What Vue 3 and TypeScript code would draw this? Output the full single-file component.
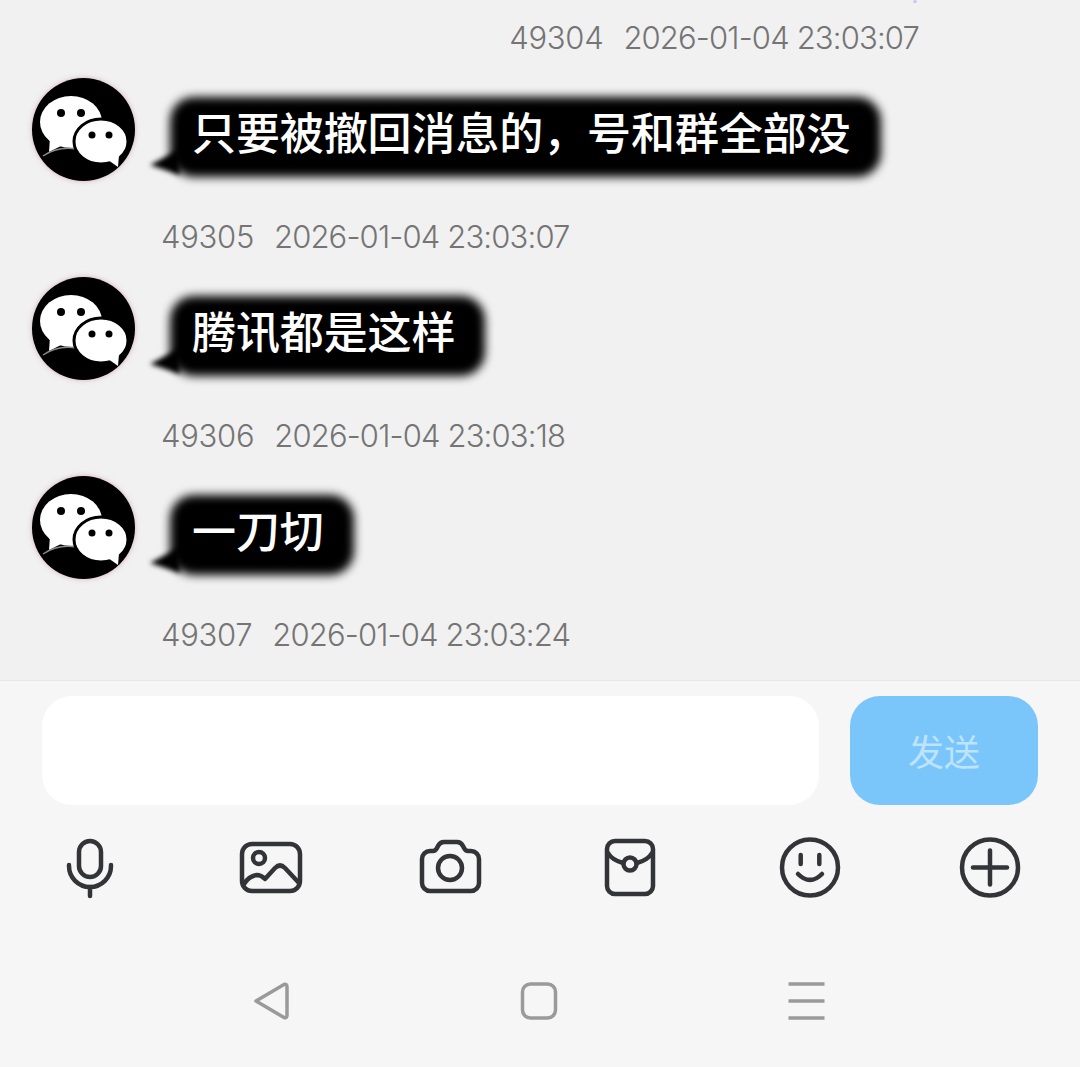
<script setup lang="ts">
interface Message {
  id: number;
  time: string;
  text: string;
}

const messages: Message[] = [
  { id: 49305, time: '2026-01-04 23:03:07', text: '只要被撤回消息的，号和群全部没' },
  { id: 49306, time: '2026-01-04 23:03:18', text: '腾讯都是这样' },
  { id: 49307, time: '2026-01-04 23:03:24', text: '一刀切' }
];
</script>

<template>
  <div class="page">
    <div class="chat">
      <span class="dot"></span>
      <div class="meta meta-right">
        <span class="num">49304</span>
        <span class="time">2026-01-04 23:03:07</span>
      </div>
      <template v-for="msg in messages" :key="msg.id">
        <div class="row">
          <svg class="avatar" viewBox="0 0 103 103">
            <ellipse cx="39" cy="44" rx="31" ry="26" fill="#fff" />
            <path d="M18 60 L17 74 L33 66 Z" fill="#fff" />
            <path d="M11 78 Q26 68 44 71" fill="none" stroke="#8a8a8a" stroke-width="1.5" />
            <circle cx="29" cy="35" r="4" fill="#000" />
            <circle cx="49" cy="35" r="4" fill="#000" />
            <ellipse cx="69" cy="63.5" rx="27" ry="22.5" fill="#fff" stroke="#000" stroke-width="3" />
            <path d="M76 82 L86 89 L87 77 Z" fill="#fff" />
            <circle cx="60" cy="57" r="3.500" fill="#000" />
            <circle cx="77" cy="57" r="3.500" fill="#000" />
          </svg>
          <div class="bubble"><span class="label">{{ msg.text }}</span></div>
        </div>
        <div class="meta">
          <span class="num">{{ msg.id }}</span>
          <span class="time">{{ msg.time }}</span>
        </div>
      </template>
    </div>

    <div class="bar">
      <div class="input-row">
        <div class="input"></div>
        <div class="send">发送</div>
      </div>

      <div class="tools">
        <svg viewBox="0 0 72 72">
          <rect x="25" y="9" width="22" height="36" rx="11" />
          <path d="M15 33 v1 a21 21 0 0 0 42 0 v-1" />
          <path d="M36 55 v9" />
        </svg>
        <svg viewBox="0 0 72 72">
          <rect x="8" y="12" width="58" height="47" rx="10" />
          <circle cx="25" cy="26" r="6" />
          <path d="M10 52 Q15 44 23 43 Q27 43 31 47 L41 36 Q46 31 51 36 L65 51" />
        </svg>
        <svg viewBox="0 0 72 72">
          <path d="M8 27 a8 8 0 0 1 8 -8 h3 c2 0 3 -1 4 -3 l1 -2 c1 -2 3 -4 6 -4 h13 c3 0 5 2 6 4 l1 2 c1 2 2 3 4 3 h3 a8 8 0 0 1 8 8 v24 a8 8 0 0 1 -8 8 h-41 a8 8 0 0 1 -8 -8 z" />
          <circle cx="36" cy="36" r="12" />
        </svg>
        <svg viewBox="0 0 72 72">
          <rect x="13" y="9" width="46" height="53" rx="8" />
          <path d="M14 21 Q18 28 29 31" />
          <path d="M58 21 Q54 28 43 31" />
          <circle cx="36" cy="32" r="6.500" />
        </svg>
        <svg viewBox="0 0 72 72">
          <circle cx="36" cy="35.500" r="28" />
          <path d="M26.700 23 v9" />
          <path d="M45.300 23 v9" />
          <path d="M24 42 Q36 54 48 42" />
        </svg>
        <svg viewBox="0 0 72 72">
          <circle cx="36" cy="35.500" r="28" />
          <path d="M19 35.500 h34" />
          <path d="M36 18.500 v34" />
        </svg>
      </div>

      <div class="nav">
        <svg viewBox="0 0 40 40">
          <path d="M5 20 L33 3.500 Q36 2.500 36 6 V34 Q36 37.500 33 36.500 Z" />
        </svg>
        <svg viewBox="0 0 40 40">
          <rect x="3.500" y="3" width="33" height="34" rx="8" />
        </svg>
        <svg viewBox="0 0 40 40">
          <path d="M1.500 3 h36" />
          <path d="M1.500 20 h36" />
          <path d="M1.500 37 h36" />
        </svg>
      </div>
    </div>
  </div>
</template>

<style scoped>
.page {
  width: 1080px;
  height: 1067px;
  display: flex;
  flex-direction: column;
  background: #f1f1f1;
  overflow: hidden;
}

.chat {
  position: relative;
  height: 680px;
  padding-top: 18px;
  box-sizing: border-box;
}

.dot {
  position: absolute;
  left: 913px;
  top: 0;
  width: 4px;
  height: 3px;
  border-radius: 50%;
  background: #c9c6ee;
}

.meta {
  display: flex;
  gap: 20px;
  height: 40px;
  line-height: 40px;
  padding-left: 161px;
  font-family: Inter, "Noto Sans", sans-serif;
  font-size: 31px;
  font-weight: 300;
  color: #757575;
}

.num {
  letter-spacing: -0.3px;
}

.time {
  letter-spacing: -0.85px;
}

.meta-right {
  justify-content: flex-end;
  padding-right: 161px;
}

.row {
  display: flex;
  align-items: flex-start;
  gap: 35px;
  padding-left: 32px;
  margin-top: 20px;
  margin-bottom: 36px;
  height: 103px;
}

.avatar {
  width: 103px;
  height: 103px;
  flex-shrink: 0;
  border-radius: 50%;
  background: #000;
  box-shadow: 0 0 5px rgba(190, 110, 130, 0.5);
}

.bubble {
  position: relative;
  margin-top: 19px;
  height: 80px;
  line-height: 68px;
  padding: 0 30px 0 22px;
  color: #fff;
  font-family: "Noto Sans CJK SC", sans-serif;
  font-size: 44px;
  font-weight: 500;
  letter-spacing: -0.1px;
  white-space: nowrap;
}

.bubble::before {
  content: '';
  position: absolute;
  inset: 0;
  background: #000;
  border-radius: 24px;
  filter: blur(5px);
}

.bubble::after {
  content: '';
  position: absolute;
  left: -20px;
  bottom: 2px;
  width: 0;
  height: 0;
  border-style: solid;
  border-width: 16px 30px 10px 0;
  border-color: transparent #000 transparent transparent;
  filter: blur(2.5px);
}

.label {
  position: relative;
  z-index: 1;
}

.bar {
  flex: 1;
  background: #f6f6f6;
  border-top: 1px solid #e6e6e6;
  box-sizing: border-box;
}

.input-row {
  display: flex;
  gap: 31px;
  padding: 15px 42px 0;
}

.input {
  width: 777px;
  height: 109px;
  background: #fff;
  border-radius: 30px;
}

.send {
  width: 188px;
  height: 109px;
  line-height: 109px;
  text-align: center;
  background: #7ac6fb;
  border-radius: 30px;
  color: #bde3fd;
  font-family: "Noto Sans CJK SC", sans-serif;
  font-size: 36px;
}

.tools {
  display: grid;
  grid-template-columns: repeat(6, 180px);
  justify-items: center;
  margin-top: 27px;
}

.tools svg {
  width: 72px;
  height: 72px;
  fill: none;
  stroke: #333438;
  stroke-width: 4.500;
  stroke-linecap: round;
  stroke-linejoin: round;
}

.nav {
  display: flex;
  gap: 228px;
  padding-left: 251px;
  margin-top: 77px;
}

.nav svg {
  width: 40px;
  height: 40px;
  fill: none;
  stroke: #9a9a9a;
  stroke-width: 3.500;
  stroke-linejoin: round;
}
</style>
